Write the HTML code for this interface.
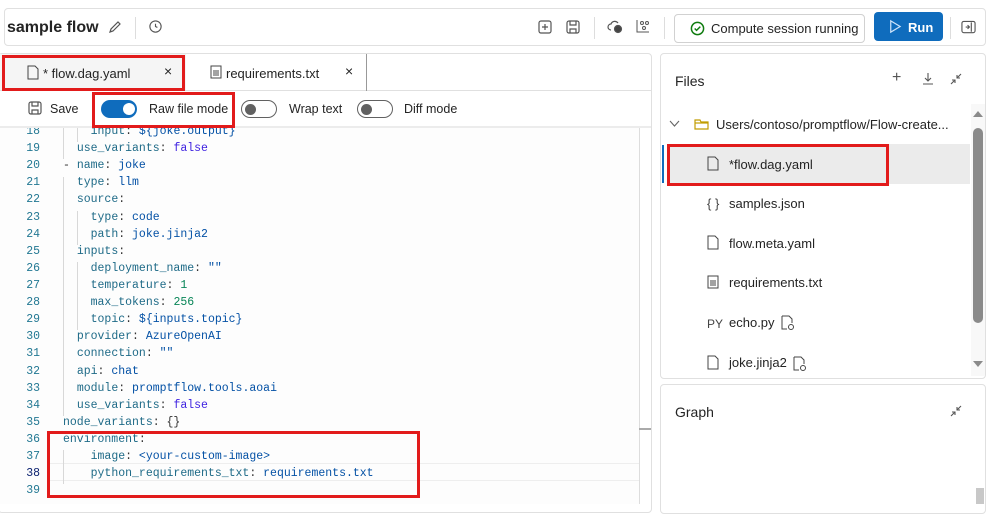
<!DOCTYPE html>
<html><head><meta charset="utf-8"><style>
*{box-sizing:border-box;margin:0;padding:0}
body{width:1007px;height:504px;overflow:hidden;background:#fff;font-family:"Liberation Sans",sans-serif;color:#242424;position:relative}
.abs{position:absolute}
.red{position:absolute;border:3px solid #e21b1b}
.code{position:absolute;left:0;top:125px;font-family:"Liberation Mono",monospace;font-size:11.5px}
.ln{position:absolute;left:0;width:40px;text-align:right;color:#237893}
.tx{position:absolute;left:63px;white-space:pre;color:#0451a5}
.k{color:#1e6a87}.n{color:#098658}.b{color:#3c1fe0}.p{color:#333}
.gd{position:absolute;width:1px;background:#d8d8d8}
.tog{position:absolute;width:36px;height:18px;border-radius:9px}
.fi{position:absolute;left:729px;font-size:13px;color:#242424}
.tb{position:absolute;font-size:12.5px}
</style></head><body>
<div class="abs" style="left:4px;top:8px;width:982px;height:38px;border:1px solid #e0e0e0;border-radius:4px"></div>
<div class="abs" style="left:7px;top:19px;font-size:16px;font-weight:bold">sample flow</div>
<svg class="abs" style="left:107px;top:19px" width="16" height="16" viewBox="0 0 16 16" fill="none" stroke="#555" stroke-width="1.2"><path d="M3 13l1-3 7-7 2 2-7 7z"/></svg>
<div class="abs" style="left:135px;top:17px;width:1px;height:22px;background:#ddd"></div>
<svg class="abs" style="left:148px;top:19px" width="15" height="15" viewBox="0 0 16 16" fill="none" stroke="#555" stroke-width="1.2"><circle cx="8" cy="8" r="6"/><path d="M8 5v3l2 1"/></svg>
<svg class="abs" style="left:537px;top:19px" width="16" height="16" viewBox="0 0 16 16" fill="none" stroke="#555" stroke-width="1.2"><rect x="2" y="2" width="12" height="12" rx="2"/><path d="M8 5v6M5 8h6"/></svg>
<svg class="abs" style="left:565px;top:19px" width="16" height="16" viewBox="0 0 16 16" fill="none" stroke="#555" stroke-width="1.2"><rect x="2" y="2" width="12" height="12" rx="2"/><path d="M5 2v4h6V2M5 14v-4h6v4"/></svg>
<div class="abs" style="left:594px;top:17px;width:1px;height:22px;background:#ddd"></div>
<svg class="abs" style="left:606px;top:18px" width="18" height="16" viewBox="0 0 18 16" fill="none" stroke="#555" stroke-width="1.2"><path d="M5 12a3 3 0 010-6 4 4 0 017-1"/><circle cx="12" cy="11" r="3.5" fill="#444"/></svg>
<svg class="abs" style="left:635px;top:18px" width="16" height="16" viewBox="0 0 16 16" fill="none" stroke="#555" stroke-width="1"><path d="M2 2v12h12"/><circle cx="7" cy="5" r="1.5"/><circle cx="12" cy="5" r="1.5"/><circle cx="9" cy="10" r="1.5"/></svg>
<div class="abs" style="left:664px;top:17px;width:1px;height:22px;background:#ddd"></div>
<div class="abs" style="left:674px;top:14px;width:191px;height:29px;border:1px solid #d1d1d1;border-radius:4px"></div>
<svg class="abs" style="left:690px;top:21px" width="15" height="15" viewBox="0 0 16 16" fill="none" stroke="#107c10" stroke-width="1.6"><circle cx="8" cy="8" r="6.5"/><path d="M5 8l2 2 4-4"/></svg>
<div class="abs" style="left:711px;top:21px;font-size:13px">Compute session running</div>
<div class="abs" style="left:874px;top:12px;width:69px;height:29px;background:#0f6cbd;border-radius:4px"></div>
<svg class="abs" style="left:887px;top:19px" width="15" height="15" viewBox="0 0 16 16" fill="none" stroke="#cfe4fa" stroke-width="1.3"><path d="M4 2l10 6-10 6z"/></svg>
<div class="abs" style="left:908px;top:20px;font-size:13px;font-weight:bold;color:#fff">Run</div>
<div class="abs" style="left:950px;top:17px;width:1px;height:22px;background:#ddd"></div>
<svg class="abs" style="left:961px;top:20px" width="15" height="14" viewBox="0 0 16 14" fill="none" stroke="#555" stroke-width="1.2"><rect x="1" y="1" width="14" height="12" rx="2"/><path d="M11 2v10M5 7h4M7 5l2 2-2 2"/></svg>

<div class="abs" style="left:-2px;top:53px;width:654px;height:460px;border:1px solid #e0e0e0;border-radius:4px"></div>
<div class="abs" style="left:0;top:54px;width:186px;height:37px;background:#f5f5f5"></div>
<div class="abs" style="left:0;top:90px;width:651px;height:1px;background:#e0e0e0"></div>
<div class="abs" style="left:366px;top:54px;width:1px;height:37px;background:#999"></div>
<svg class="abs" style="left:27px;top:65px" width="13" height="15" viewBox="0 0 13 15" fill="none" stroke="#444" stroke-width="1"><path d="M1 1h7l3 3v10H1z"/></svg>
<div class="abs" style="left:43px;top:66px;font-size:13px">* flow.dag.yaml</div>
<div class="abs" style="left:164px;top:63px;font-size:14px">×</div>
<svg class="abs" style="left:210px;top:65px" width="12" height="14" viewBox="0 0 12 14" fill="none" stroke="#444" stroke-width="1"><path d="M1 1h10v12H1zM3 6h6M3 8h6M3 10h6"/></svg>
<div class="abs" style="left:226px;top:66px;font-size:13px">requirements.txt</div>
<div class="abs" style="left:345px;top:63px;font-size:14px">×</div>
<div class="red" style="left:2px;top:55px;width:183px;height:36px"></div>

<svg class="abs" style="left:28px;top:101px" width="14" height="14" viewBox="0 0 14 14" fill="none" stroke="#555" stroke-width="1.2"><rect x="1" y="1" width="12" height="12" rx="2"/><path d="M4 1v4h6V1M4 13V9h6v4"/></svg>
<div class="tb" style="left:50px;top:102px">Save</div>
<div class="tog" style="left:101px;top:100px;background:#0f6cbd"></div>
<div class="abs" style="left:123px;top:103px;width:12px;height:12px;border-radius:6px;background:#fff"></div>
<div class="tb" style="left:149px;top:102px">Raw file mode</div>
<div class="tog" style="left:241px;top:100px;border:1px solid #616161"></div>
<div class="abs" style="left:245px;top:104px;width:11px;height:11px;border-radius:6px;background:#616161"></div>
<div class="tb" style="left:289px;top:102px">Wrap text</div>
<div class="tog" style="left:357px;top:100px;border:1px solid #616161"></div>
<div class="abs" style="left:361px;top:104px;width:11px;height:11px;border-radius:6px;background:#616161"></div>
<div class="tb" style="left:404px;top:102px">Diff mode</div>
<div class="red" style="left:92px;top:92px;width:143px;height:36px"></div>

<div class="abs" style="left:0;top:128px;width:639px;height:376px;background:#fdfdfd"></div>
<div class="abs" style="left:639px;top:128px;width:1px;height:376px;background:#ddd"></div>
<div class="abs" style="left:639px;top:428px;width:12px;height:2px;background:#aaa"></div>
<div class="abs" style="left:50px;top:463px;width:589px;height:1px;background:#eee"></div>
<div class="abs" style="left:50px;top:480px;width:589px;height:1px;background:#eee"></div>

<div class="code">
<div class="gd" style="left:63px;top:0;height:17px"></div>
<div class="gd" style="left:63px;top:17px;height:17px"></div>
<div class="gd" style="left:63px;top:52px;height:239px"></div>
<div class="gd" style="left:77px;top:0;height:17px"></div>
<div class="gd" style="left:77px;top:86px;height:34px"></div>
<div class="gd" style="left:77px;top:137px;height:68px"></div>
<div class="gd" style="left:63px;top:325px;height:34px"></div>
<div class="ln" style="top:0">18</div><div class="tx" style="top:0">    <span class="k">input</span><span class="p">:</span> ${joke.output}</div>
<div class="ln" style="top:17px">19</div><div class="tx" style="top:17px">  <span class="k">use_variants</span><span class="p">:</span> <span class="b">false</span></div>
<div class="ln" style="top:34px">20</div><div class="tx" style="top:34px"><span class="p">-</span> <span class="k">name</span><span class="p">:</span> joke</div>
<div class="ln" style="top:51px">21</div><div class="tx" style="top:51px">  <span class="k">type</span><span class="p">:</span> llm</div>
<div class="ln" style="top:68px">22</div><div class="tx" style="top:68px">  <span class="k">source</span><span class="p">:</span></div>
<div class="ln" style="top:86px">23</div><div class="tx" style="top:86px">    <span class="k">type</span><span class="p">:</span> code</div>
<div class="ln" style="top:103px">24</div><div class="tx" style="top:103px">    <span class="k">path</span><span class="p">:</span> joke.jinja2</div>
<div class="ln" style="top:120px">25</div><div class="tx" style="top:120px">  <span class="k">inputs</span><span class="p">:</span></div>
<div class="ln" style="top:137px">26</div><div class="tx" style="top:137px">    <span class="k">deployment_name</span><span class="p">:</span> ""</div>
<div class="ln" style="top:154px">27</div><div class="tx" style="top:154px">    <span class="k">temperature</span><span class="p">:</span> <span class="n">1</span></div>
<div class="ln" style="top:171px">28</div><div class="tx" style="top:171px">    <span class="k">max_tokens</span><span class="p">:</span> <span class="n">256</span></div>
<div class="ln" style="top:188px">29</div><div class="tx" style="top:188px">    <span class="k">topic</span><span class="p">:</span> ${inputs.topic}</div>
<div class="ln" style="top:205px">30</div><div class="tx" style="top:205px">  <span class="k">provider</span><span class="p">:</span> AzureOpenAI</div>
<div class="ln" style="top:222px">31</div><div class="tx" style="top:222px">  <span class="k">connection</span><span class="p">:</span> ""</div>
<div class="ln" style="top:240px">32</div><div class="tx" style="top:240px">  <span class="k">api</span><span class="p">:</span> chat</div>
<div class="ln" style="top:257px">33</div><div class="tx" style="top:257px">  <span class="k">module</span><span class="p">:</span> promptflow.tools.aoai</div>
<div class="ln" style="top:274px">34</div><div class="tx" style="top:274px">  <span class="k">use_variants</span><span class="p">:</span> <span class="b">false</span></div>
<div class="ln" style="top:291px">35</div><div class="tx" style="top:291px"><span class="k">node_variants</span><span class="p">:</span> <span class="p">{}</span></div>
<div class="ln" style="top:308px">36</div><div class="tx" style="top:308px"><span class="k">environment</span><span class="p">:</span></div>
<div class="ln" style="top:325px">37</div><div class="tx" style="top:325px">    <span class="k">image</span><span class="p">:</span> &lt;your-custom-image&gt;</div>
<div class="ln" style="top:342px;color:#0b216f">38</div><div class="tx" style="top:342px">    <span class="k">python_requirements_txt</span><span class="p">:</span> requirements.txt</div>
<div class="ln" style="top:359px">39</div>
</div>
<div class="abs" style="left:0;top:91px;width:651px;height:36px;background:#fff;z-index:-0"></div>
<svg class="abs" style="left:28px;top:101px" width="14" height="14" viewBox="0 0 14 14" fill="none" stroke="#555" stroke-width="1.2"><rect x="1" y="1" width="12" height="12" rx="2"/><path d="M4 1v4h6V1M4 13V9h6v4"/></svg>
<div class="tb" style="left:50px;top:102px">Save</div>
<div class="tog" style="left:101px;top:100px;background:#0f6cbd"></div>
<div class="abs" style="left:123px;top:103px;width:12px;height:12px;border-radius:6px;background:#fff"></div>
<div class="tb" style="left:149px;top:102px">Raw file mode</div>
<div class="tog" style="left:241px;top:100px;border:1px solid #616161"></div>
<div class="abs" style="left:245px;top:104px;width:11px;height:11px;border-radius:6px;background:#616161"></div>
<div class="tb" style="left:289px;top:102px">Wrap text</div>
<div class="tog" style="left:357px;top:100px;border:1px solid #616161"></div>
<div class="abs" style="left:361px;top:104px;width:11px;height:11px;border-radius:6px;background:#616161"></div>
<div class="tb" style="left:404px;top:102px">Diff mode</div>
<div class="abs" style="left:0;top:126px;width:651px;height:2px;background:#ececec"></div>
<div class="red" style="left:92px;top:92px;width:143px;height:36px"></div>
<div class="red" style="left:47px;top:431px;width:373px;height:67px"></div>

<div class="abs" style="left:660px;top:53px;width:326px;height:326px;border:1px solid #e0e0e0;border-radius:4px"></div>
<div class="abs" style="left:675px;top:73px;font-size:14px">Files</div>
<div class="abs" style="left:892px;top:69px;font-size:16px;color:#555">+</div>
<svg class="abs" style="left:922px;top:72px" width="12" height="13" viewBox="0 0 12 13" fill="none" stroke="#555" stroke-width="1.1"><path d="M6 1v8M3 6l3 3 3-3M1 12h10"/></svg>
<svg class="abs" style="left:950px;top:73px" width="12" height="12" viewBox="0 0 12 12" fill="none" stroke="#555" stroke-width="1.1"><path d="M11 1L7 5M7 2v3h3M1 11l4-4M5 10V7H2"/></svg>
<svg class="abs" style="left:669px;top:120px" width="11" height="8" viewBox="0 0 11 8" fill="none" stroke="#666" stroke-width="1.1"><path d="M1 1l4.5 5L10 1"/></svg>
<svg class="abs" style="left:694px;top:117px" width="15" height="13" viewBox="0 0 15 13" fill="none" stroke="#c19c00" stroke-width="1.2"><path d="M1 3h5l1 2h7v7H1z"/><path d="M1 6h13"/></svg>
<div class="abs" style="left:716px;top:117px;font-size:13px">Users/contoso/promptflow/Flow-create...</div>
<div class="abs" style="left:667px;top:144px;width:303px;height:40px;background:#ebebeb"></div>
<div class="abs" style="left:662px;top:145px;width:2px;height:38px;background:#0f6cbd"></div>
<svg class="abs" style="left:707px;top:156px" width="13" height="15" viewBox="0 0 13 15" fill="none" stroke="#444" stroke-width="1"><path d="M1 1h7l3 3v10H1z"/></svg>
<div class="fi" style="top:157px">*flow.dag.yaml</div>
<div class="red" style="left:667px;top:144px;width:222px;height:42px"></div>
<div class="abs" style="left:707px;top:196px;font-size:13px;color:#444">{ }</div>
<div class="fi" style="top:196px">samples.json</div>
<svg class="abs" style="left:707px;top:235px" width="13" height="15" viewBox="0 0 13 15" fill="none" stroke="#444" stroke-width="1"><path d="M1 1h7l3 3v10H1z"/></svg>
<div class="fi" style="top:236px">flow.meta.yaml</div>
<svg class="abs" style="left:707px;top:275px" width="12" height="14" viewBox="0 0 12 14" fill="none" stroke="#444" stroke-width="1"><path d="M1 1h10v12H1zM3 6h6M3 8h6M3 10h6"/></svg>
<div class="fi" style="top:275px">requirements.txt</div>
<div class="abs" style="left:707px;top:317px;font-size:12px;color:#444">PY</div>
<div class="fi" style="top:315px">echo.py</div>
<svg class="abs" style="left:781px;top:315px" width="14" height="15" viewBox="0 0 14 15" fill="none" stroke="#444" stroke-width="1"><path d="M1 1h7l3 3v4M6 14H1V1"/><circle cx="10" cy="12" r="2.5"/></svg>
<svg class="abs" style="left:707px;top:355px" width="13" height="15" viewBox="0 0 13 15" fill="none" stroke="#444" stroke-width="1"><path d="M1 1h7l3 3v10H1z"/></svg>
<div class="fi" style="top:355px">joke.jinja2</div>
<svg class="abs" style="left:793px;top:356px" width="14" height="15" viewBox="0 0 14 15" fill="none" stroke="#444" stroke-width="1"><path d="M1 1h7l3 3v4M6 14H1V1"/><circle cx="10" cy="12" r="2.5"/></svg>
<div class="abs" style="left:971px;top:104px;width:14px;height:272px;background:#f8f8f8"></div>
<div class="abs" style="left:973px;top:128px;width:10px;height:195px;background:#8a8a8a;border-radius:5px"></div>
<div class="abs" style="left:973px;top:111px;width:0;height:0;border-left:5px solid transparent;border-right:5px solid transparent;border-bottom:6px solid #8a8a8a"></div>
<div class="abs" style="left:973px;top:361px;width:0;height:0;border-left:5px solid transparent;border-right:5px solid transparent;border-top:6px solid #8a8a8a"></div>

<div class="abs" style="left:660px;top:384px;width:326px;height:130px;border:1px solid #e0e0e0;border-radius:4px"></div>
<div class="abs" style="left:675px;top:404px;font-size:14px">Graph</div>
<svg class="abs" style="left:950px;top:405px" width="12" height="12" viewBox="0 0 12 12" fill="none" stroke="#555" stroke-width="1.1"><path d="M11 1L7 5M7 2v3h3M1 11l4-4M5 10V7H2"/></svg>
<div class="abs" style="left:976px;top:488px;width:8px;height:16px;background:#c8c8c8"></div>
</body></html>
